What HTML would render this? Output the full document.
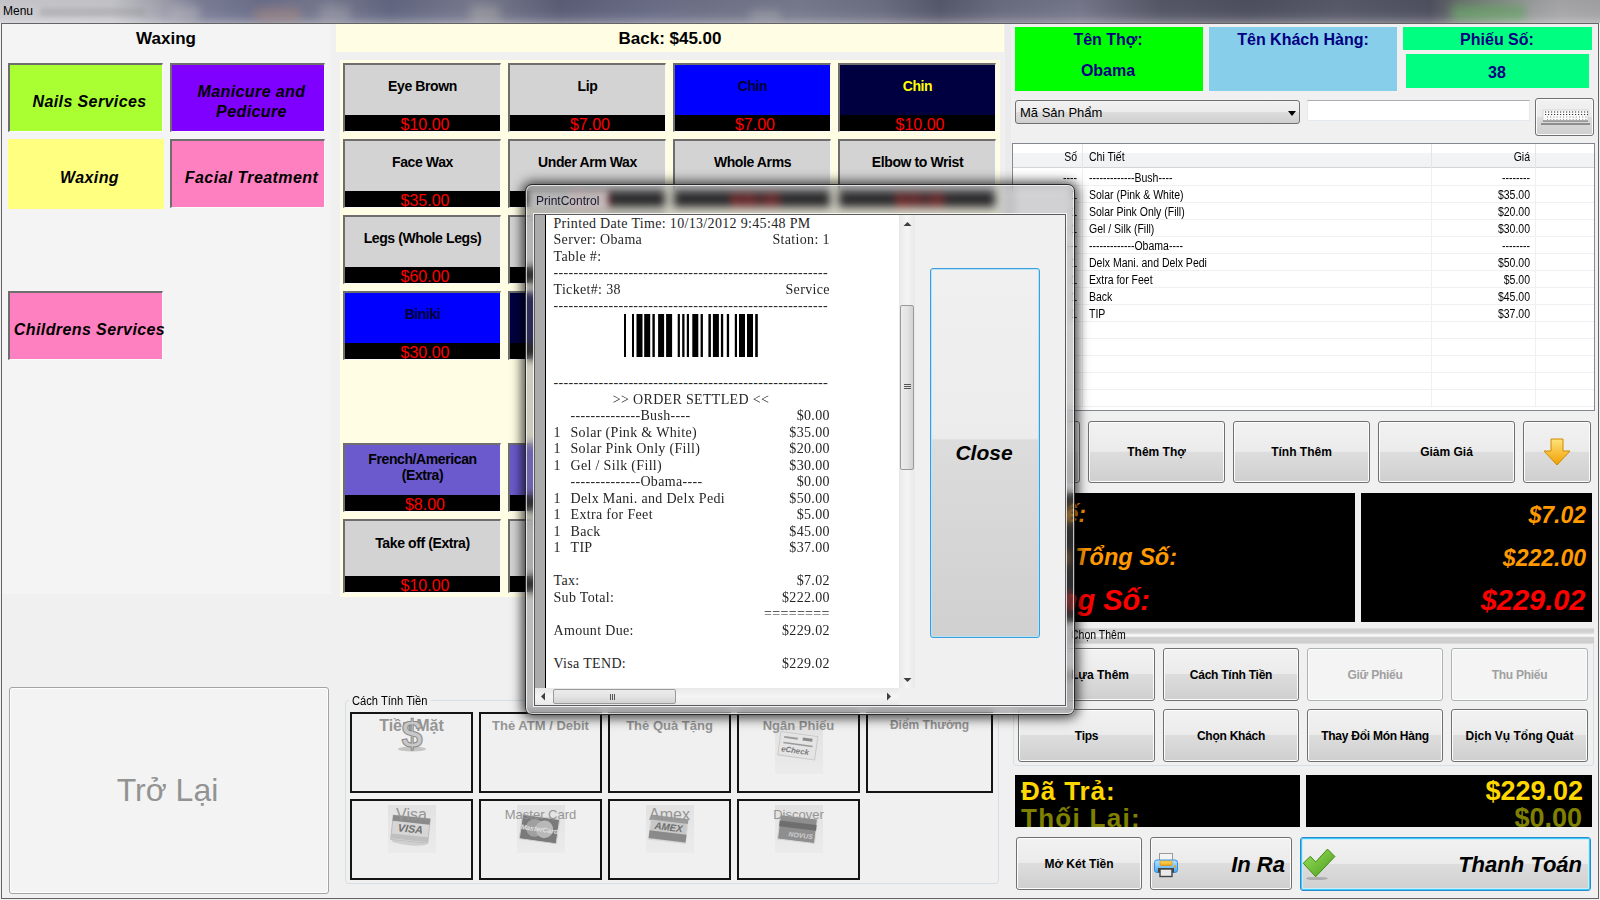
<!DOCTYPE html><html><head><meta charset="utf-8"><style>
html,body{margin:0;padding:0;width:1600px;height:900px;overflow:hidden;background:#f0f0f0;font-family:"Liberation Sans",sans-serif;}
div{position:absolute;box-sizing:border-box;}
.t{white-space:nowrap;line-height:1;}
.w7{border:1px solid #707070;border-radius:3px;background:linear-gradient(180deg,#f2f2f2 0%,#ebebeb 49%,#dddddd 50%,#cfcfcf 100%);box-shadow:inset 0 0 0 1px #fcfcfc;}
.w7d{border:1px solid #adb2b5;border-radius:3px;background:#f4f4f4;box-shadow:inset 0 0 0 1px #fcfcfc;}
.cat{border-top:2px solid #6e6e6e;border-left:2px solid #6e6e6e;border-right:1px solid #fcfcfc;border-bottom:1px solid #fcfcfc;}
.cat0 .t,.cat .t{font-weight:bold;font-style:italic;font-size:16px;color:#000;}
.pb{border-top:2px solid #6e6e6e;border-left:2px solid #6e6e6e;border-right:1px solid #fafafa;border-bottom:1px solid #fafafa;overflow:hidden;}
.pb .lb{position:absolute;left:0;right:0;text-align:center;font-weight:bold;font-size:14px;line-height:17px;white-space:nowrap;letter-spacing:-0.4px;}
.pb .pr{position:absolute;left:0;right:0;bottom:0;height:16px;background:#000;color:#f00;font-size:16px;text-align:center;line-height:19px;padding-left:5px;overflow:hidden;}
.pay{border:2px solid #141414;}
.pay .t{color:#9a9a9a;}
.blk{background:#000;overflow:hidden;}
</style></head><body><div style="left:0px;top:0px;width:1600px;height:23px;background:linear-gradient(90deg,#c9c9cd 0px,#c6c6cb 110px,#a3a3b0 160px,#7c7e96 200px,#6c6f8a 260px,#787a90 330px,#626680 390px,#7a7c90 480px,#5b5e76 560px,#6a6d86 650px,#717488 720px,#777a8c 800px,#6c6e82 880px,#56586c 940px,#6a6c80 1000px,#75778a 1080px,#565868 1160px,#4e5060 1250px,#585a6a 1340px,#4f5160 1430px,#6a6e6e 1460px,#868a88 1500px,#9a9c9c 1530px,#a6a6a8 1560px,#a2a2a4 1600px);"></div><div style="left:1452px;top:5px;width:73px;height:17px;background:#68a268;filter:blur(5px);opacity:.75;"></div><div style="left:0px;top:0px;width:1600px;height:23px;background:linear-gradient(180deg,rgba(0,0,0,.03) 0px,rgba(255,255,255,0) 10px,rgba(255,255,255,.06) 16px,rgba(255,255,255,.2) 21px,rgba(255,255,255,.3) 23px);"></div><div style="left:40px;top:8px;width:105px;height:8px;background:rgba(140,140,140,.35);filter:blur(2.5px);"></div><div style="left:255px;top:8px;width:45px;height:14px;background:rgba(200,150,120,.35);filter:blur(5px);"></div><div style="left:170px;top:6px;width:30px;height:16px;background:rgba(200,200,200,.35);filter:blur(5px);"></div><div style="left:320px;top:6px;width:30px;height:16px;background:rgba(190,190,190,.3);filter:blur(5px);"></div><div style="left:470px;top:6px;width:30px;height:16px;background:rgba(200,200,180,.3);filter:blur(5px);"></div><div style="left:750px;top:10px;width:30px;height:12px;background:rgba(200,200,200,.3);filter:blur(5px);"></div><div class="t" style="left:3px;top:5px;font-size:12px;color:#000;">Menu</div><div style="left:1px;top:23px;width:1598px;height:876px;border:1px solid #646464;background:#f0f0f0;"></div><div style="left:2px;top:24px;width:329px;height:570px;background:#f4f4f4;"></div><div class="t" style="left:-34.0px;top:30px;width:400px;text-align:center;font-weight:bold;font-size:17px;">Waxing</div><div class="cat" style="left:8px;top:63px;width:155px;height:69px;background:#aaff33;"><div class="t" style="left:3.5px;right:-3.5px;top:calc(50% + 4px);transform:translateY(-50%);text-align:center;line-height:20px;letter-spacing:0.4px;">Nails Services</div></div><div class="cat" style="left:170px;top:63px;width:155px;height:69px;background:#8000ff;"><div class="t" style="left:3.5px;right:-3.5px;top:calc(50% + 4px);transform:translateY(-50%);text-align:center;line-height:20px;letter-spacing:0.4px;">Manicure and<br>Pedicure</div></div><div class="cat0" style="left:8px;top:139px;width:156px;height:70px;background:#ffff80;"><div class="t" style="left:3.5px;right:-3.5px;top:calc(50% + 4px);transform:translateY(-50%);text-align:center;line-height:20px;letter-spacing:0.4px;">Waxing</div></div><div class="cat" style="left:170px;top:139px;width:155px;height:69px;background:#ff80c0;"><div class="t" style="left:3.5px;right:-3.5px;top:calc(50% + 4px);transform:translateY(-50%);text-align:center;line-height:20px;letter-spacing:0.4px;">Facial Treatment</div></div><div class="cat" style="left:8px;top:291px;width:155px;height:69px;background:#ff80c0;"><div class="t" style="left:3.5px;right:-3.5px;top:calc(50% + 4px);transform:translateY(-50%);text-align:center;line-height:20px;letter-spacing:0.4px;">Childrens Services</div></div><div style="left:336px;top:24px;width:668px;height:28px;background:#fffde3;"></div><div class="t" style="left:470.0px;top:30px;width:400px;text-align:center;font-weight:bold;font-size:17px;">Back: $45.00</div><div style="left:340px;top:60px;width:660px;height:537px;background:#fffde3;"></div><div class="pb" style="left:343px;top:63px;width:158px;height:69px;background:#d3d3d3;"><div class="lb" style="top:13px;color:#000;">Eye Brown</div><div class="pr" style="height:16px;">$10.00</div></div><div class="pb" style="left:508px;top:63px;width:158px;height:69px;background:#d3d3d3;"><div class="lb" style="top:13px;color:#000;">Lip</div><div class="pr" style="height:16px;">$7.00</div></div><div class="pb" style="left:673px;top:63px;width:158px;height:69px;background:#0000ff;"><div class="lb" style="top:13px;color:#000030;">Chin</div><div class="pr" style="height:16px;">$7.00</div></div><div class="pb" style="left:838px;top:63px;width:158px;height:69px;background:#000040;"><div class="lb" style="top:13px;color:#ffff00;">Chin</div><div class="pr" style="height:16px;">$10.00</div></div><div class="pb" style="left:343px;top:139px;width:158px;height:69px;background:#d3d3d3;"><div class="lb" style="top:13px;color:#000;">Face Wax</div><div class="pr" style="height:16px;">$35.00</div></div><div class="pb" style="left:508px;top:139px;width:158px;height:69px;background:#d3d3d3;"><div class="lb" style="top:13px;color:#000;">Under Arm Wax</div><div class="pr" style="height:16px;">$8.00</div></div><div class="pb" style="left:673px;top:139px;width:158px;height:69px;background:#d3d3d3;"><div class="lb" style="top:13px;color:#000;">Whole Arms</div><div class="pr" style="height:16px;">$30.00</div></div><div class="pb" style="left:838px;top:139px;width:158px;height:69px;background:#d3d3d3;"><div class="lb" style="top:13px;color:#000;">Elbow to Wrist</div><div class="pr" style="height:16px;">$20.00</div></div><div class="pb" style="left:343px;top:215px;width:158px;height:69px;background:#d3d3d3;"><div class="lb" style="top:13px;color:#000;">Legs (Whole Legs)</div><div class="pr" style="height:16px;">$60.00</div></div><div class="pb" style="left:508px;top:215px;width:158px;height:69px;background:#d3d3d3;"><div class="lb" style="top:13px;color:#000;">Half Legs</div><div class="pr" style="height:16px;">$35.00</div></div><div class="pb" style="left:343px;top:291px;width:158px;height:69px;background:#0000ff;"><div class="lb" style="top:13px;color:#000030;">Biniki</div><div class="pr" style="height:16px;">$30.00</div></div><div class="pb" style="left:508px;top:291px;width:158px;height:69px;background:#000040;"><div class="lb" style="top:13px;color:#ffff00;">Brazilian</div><div class="pr" style="height:16px;">$50.00</div></div><div class="pb" style="left:343px;top:443px;width:158px;height:69px;background:#6a5acd;"><div class="lb" style="top:5.5px;color:#000;line-height:16.5px;">French/American<br>(Extra)</div><div class="pr" style="height:16px;">$8.00</div></div><div class="pb" style="left:508px;top:443px;width:158px;height:69px;background:#6a5acd;"><div class="lb" style="top:13px;color:#000;">Pink &amp; White</div><div class="pr" style="height:16px;">$8.00</div></div><div class="pb" style="left:343px;top:519px;width:158px;height:74px;background:#d3d3d3;"><div class="lb" style="top:13.5px;color:#000;">Take off (Extra)</div><div class="pr" style="height:16px;">$10.00</div></div><div class="pb" style="left:508px;top:519px;width:158px;height:74px;background:#d3d3d3;"><div class="lb" style="top:13.5px;color:#000;">Design</div><div class="pr" style="height:16px;">$5.00</div></div><div style="left:9px;top:687px;width:320px;height:207px;border:1px solid #a3a3a3;border-radius:3px;background:#f3f3f3;box-shadow:inset 0 0 0 1px #fdfdfd;"><div class="t" style="left:-1.5px;right:1.5px;top:85.7px;text-align:center;font-size:32px;color:#939393;">Trở Lại</div></div><div style="left:345px;top:700px;width:654px;height:184px;border:1px solid #d5dfe5;border-radius:3px;"></div><div style="left:349px;top:690px;width:82px;height:16px;background:#f0f0f0;"></div><div class="t" style="left:352px;top:695px;font-size:12px;color:#000;transform:scaleX(0.93);transform-origin:left;">Cách Tính Tiền</div><div class="pay" style="left:350px;top:712px;width:123px;height:81px;"><div class="t" style="left:0;right:0;text-align:center;color:#959595;font-weight:bold;font-size:16px;top:4px;">Tiền Mặt</div></div><div class="pay" style="left:479px;top:712px;width:123px;height:81px;"><div class="t" style="left:0;right:0;text-align:center;color:#959595;font-weight:bold;font-size:13px;top:4.5px;">Thẻ ATM / Debit</div></div><div class="pay" style="left:608px;top:712px;width:123px;height:81px;"><div class="t" style="left:0;right:0;text-align:center;color:#959595;font-weight:bold;font-size:13px;top:4.5px;">Thẻ Quà Tặng</div></div><svg style="position:absolute;left:774.5px;top:726px" width="48" height="48" viewBox="0 0 48 48"><defs><linearGradient id="sqg" x1="0" y1="0" x2="0" y2="1"><stop offset="0" stop-color="#e2e2e2"/><stop offset="1" stop-color="#ebebeb"/></linearGradient></defs><rect x="0" y="0" width="48" height="48" fill="url(#sqg)"/><g transform="translate(-1,4) scale(0.98)"><g transform="rotate(8 24 18)"><rect x="5" y="4" width="38" height="24" fill="#e4e4e4" stroke="#c8c8c8"/><rect x="9" y="8" width="14" height="2" fill="#9a9a9a"/><rect x="28" y="7" width="10" height="3" fill="#8a8a8a"/><rect x="9" y="14" width="30" height="1.5" fill="#9a9a9a"/><text x="22" y="24" text-anchor="middle" font-family="Liberation Sans" font-weight="bold" font-style="italic" font-size="8" fill="#7a7a7a">eCheck</text></g></g></svg><div class="pay" style="left:737px;top:712px;width:123px;height:81px;"><div class="t" style="left:0;right:0;text-align:center;color:#959595;font-weight:bold;font-size:13px;top:4.5px;">Ngân Phiếu</div></div><div class="pay" style="left:866px;top:712px;width:127px;height:81px;"><div class="t" style="left:0;right:0;text-align:center;color:#959595;font-weight:bold;font-size:12px;top:5px;">Điểm Thưởng</div></div><svg style="position:absolute;left:387.5px;top:805px" width="48" height="48" viewBox="0 0 48 48"><defs><linearGradient id="sqg" x1="0" y1="0" x2="0" y2="1"><stop offset="0" stop-color="#e2e2e2"/><stop offset="1" stop-color="#ebebeb"/></linearGradient></defs><rect x="0" y="0" width="48" height="48" fill="url(#sqg)"/><g transform="translate(-1,4) scale(0.98)"><g transform="rotate(6 24 20)"><ellipse cx="24" cy="34" rx="18" ry="3" fill="#cfcfcf"/><rect x="5" y="8" width="38" height="25" fill="#d6d6d6" stroke="#bdbdbd"/><rect x="5" y="8" width="38" height="6" fill="#8a8a8a"/><rect x="5" y="27" width="38" height="5" fill="#bfbfbf"/><text x="24" y="24" text-anchor="middle" font-family="Liberation Sans" font-weight="bold" font-style="italic" font-size="11" fill="#707070">VISA</text></g></g></svg><div class="pay" style="left:350px;top:799px;width:123px;height:81px;"><div class="t" style="left:0;right:0;text-align:center;color:#959595;font-size:16px;top:6px;">Visa</div></div><svg style="position:absolute;left:516.5px;top:805px" width="48" height="48" viewBox="0 0 48 48"><defs><linearGradient id="sqg" x1="0" y1="0" x2="0" y2="1"><stop offset="0" stop-color="#e2e2e2"/><stop offset="1" stop-color="#ebebeb"/></linearGradient></defs><rect x="0" y="0" width="48" height="48" fill="url(#sqg)"/><g transform="translate(-1,4) scale(0.98)"><g transform="rotate(8 24 20)"><rect x="5" y="8" width="38" height="25" fill="#7a7a7a" stroke="#cfcfcf"/><circle cx="19" cy="20" r="9" fill="#a0a0a0"/><circle cx="29" cy="20" r="9" fill="#b8b8b8"/><text x="24" y="23" text-anchor="middle" font-family="Liberation Sans" font-weight="bold" font-style="italic" font-size="7" fill="#e0e0e0">MasterCard</text></g></g></svg><div class="pay" style="left:479px;top:799px;width:123px;height:81px;"><div class="t" style="left:0;right:0;text-align:center;color:#959595;font-size:13px;top:7px;">Master Card</div></div><svg style="position:absolute;left:645.5px;top:805px" width="48" height="48" viewBox="0 0 48 48"><defs><linearGradient id="sqg" x1="0" y1="0" x2="0" y2="1"><stop offset="0" stop-color="#e2e2e2"/><stop offset="1" stop-color="#ebebeb"/></linearGradient></defs><rect x="0" y="0" width="48" height="48" fill="url(#sqg)"/><g transform="translate(-1,4) scale(0.98)"><g transform="rotate(7 24 20)"><rect x="5" y="8" width="38" height="25" fill="#c8c8c8" stroke="#d8d8d8"/><rect x="5" y="8" width="38" height="5" fill="#9a9a9a"/><rect x="5" y="24" width="38" height="8" fill="#8a8a8a"/><text x="24" y="22" text-anchor="middle" font-family="Liberation Sans" font-weight="bold" font-style="italic" font-size="10" fill="#6e6e6e">AMEX</text></g></g></svg><div class="pay" style="left:608px;top:799px;width:123px;height:81px;"><div class="t" style="left:0;right:0;text-align:center;color:#959595;font-size:16px;top:6px;">Amex</div></div><svg style="position:absolute;left:774.5px;top:805px" width="48" height="48" viewBox="0 0 48 48"><defs><linearGradient id="sqg" x1="0" y1="0" x2="0" y2="1"><stop offset="0" stop-color="#e2e2e2"/><stop offset="1" stop-color="#ebebeb"/></linearGradient></defs><rect x="0" y="0" width="48" height="48" fill="url(#sqg)"/><g transform="translate(-1,4) scale(0.98)"><g transform="rotate(7 24 20)"><rect x="5" y="8" width="38" height="25" fill="#8e8e8e" stroke="#d8d8d8"/><rect x="5" y="14" width="38" height="6" fill="#6e6e6e"/><text x="28" y="29" text-anchor="middle" font-family="Liberation Sans" font-weight="bold" font-style="italic" font-size="7" fill="#d0d0d0">NOVUS</text></g></g></svg><div class="pay" style="left:737px;top:799px;width:123px;height:81px;"><div class="t" style="left:0;right:0;text-align:center;color:#959595;font-size:13px;top:7px;">Discover</div></div><svg style="position:absolute;left:392px;top:714px" width="40" height="42" viewBox="0 0 40 42"><ellipse cx="20" cy="35" rx="14" ry="2.5" fill="#c4c4c4"/><text x="20" y="33" text-anchor="middle" font-family="Liberation Sans" font-weight="bold" font-size="38" fill="#c8c8c8" stroke="#8a8a8a" stroke-width="1">$</text></svg><div style="left:1005px;top:24px;width:6px;height:576px;background:#ebebeb;"></div><div style="left:1015px;top:27px;width:188px;height:64px;background:#00ff00;"></div><div class="t" style="left:908.0px;top:31.5px;width:400px;text-align:center;font-weight:bold;font-size:16px;color:#000080;">Tên Thợ:</div><div class="t" style="left:908.0px;top:63px;width:400px;text-align:center;font-weight:bold;font-size:16px;color:#000080;">Obama</div><div style="left:1209px;top:27px;width:188px;height:64px;background:#87ceeb;"></div><div class="t" style="left:1103.0px;top:31.5px;width:400px;text-align:center;font-weight:bold;font-size:16px;color:#000080;">Tên Khách Hàng:</div><div style="left:1403px;top:27px;width:189px;height:23px;background:#00ff80;"></div><div class="t" style="left:1297.0px;top:31.5px;width:400px;text-align:center;font-weight:bold;font-size:16px;color:#000080;">Phiếu Số:</div><div style="left:1406px;top:54px;width:183px;height:34px;background:#00ff80;"></div><div class="t" style="left:1297.0px;top:65px;width:400px;text-align:center;font-weight:bold;font-size:16px;color:#000080;">38</div><div style="left:1015px;top:100px;width:285px;height:24px;border:1px solid #707070;border-radius:3px;background:linear-gradient(180deg,#f2f2f2 0%,#ebebeb 49%,#dddddd 50%,#cfcfcf 100%);"><div class="t" style="left:4px;top:5px;font-size:13px;color:#000;">Mã Sản Phẩm</div><div style="left:272px;top:10px;width:0;height:0;border-left:4px solid transparent;border-right:4px solid transparent;border-top:5px solid #000;"></div></div><div style="left:1307px;top:100px;width:223px;height:21px;background:#fff;border:1px solid #e3e9ef;border-top-color:#abadb3;"></div><div class="w7" style="left:1535px;top:98px;width:59px;height:38px;"><svg style="position:absolute;left:3px;top:8px" width="54" height="20" viewBox="0 0 54 20"><rect x="4" y="3" width="45" height="11" fill="#fbfbfb" stroke="#cfcfcf" stroke-width="0.8"/><line x1="6" y1="5" x2="49" y2="5" stroke="#222" stroke-width="1" stroke-dasharray="1.2 1.8"/><line x1="6" y1="7.5" x2="49" y2="7.5" stroke="#333" stroke-width="1" stroke-dasharray="1.2 1.8"/><line x1="8" y1="10" x2="49" y2="10" stroke="#666" stroke-width="0.8" stroke-dasharray="1 2.2"/><line x1="8" y1="12.5" x2="49" y2="12.5" stroke="#888" stroke-width="0.8" stroke-dasharray="1 2.2"/><line x1="4" y1="14" x2="49" y2="14" stroke="#555" stroke-width="0.9"/><line x1="2" y1="17" x2="51" y2="17" stroke="#444" stroke-width="1.1"/></svg></div><div style="left:1012px;top:143px;width:583px;height:268px;background:#fff;border:1px solid #828790;"></div><div style="left:1013px;top:144px;width:581px;height:24px;background:linear-gradient(180deg,#ffffff 0%,#ffffff 40%,#f3f4f6 41%,#f1f2f4 100%);border-bottom:1px solid #d5d5d5;"></div><div style="left:1082px;top:144px;width:1px;height:24px;background:#e3e5e8;"></div><div style="left:1431px;top:144px;width:1px;height:24px;background:#e3e5e8;"></div><div style="left:1535px;top:144px;width:1px;height:24px;background:#e3e5e8;"></div><div class="t" style="left:677px;top:151px;width:400px;text-align:right;font-size:12px;color:#000;transform:scaleX(0.875);transform-origin:right;">Số</div><div class="t" style="left:1089px;top:151px;font-size:12px;color:#000;transform:scaleX(0.875);transform-origin:left;">Chi Tiết</div><div class="t" style="left:1130px;top:151px;width:400px;text-align:right;font-size:12px;color:#000;transform:scaleX(0.875);transform-origin:right;">Giá</div><div style="left:1013px;top:185px;width:581px;height:1px;background:#f0f0f0;"></div><div style="left:1013px;top:202px;width:581px;height:1px;background:#f0f0f0;"></div><div style="left:1013px;top:219px;width:581px;height:1px;background:#f0f0f0;"></div><div style="left:1013px;top:236px;width:581px;height:1px;background:#f0f0f0;"></div><div style="left:1013px;top:253px;width:581px;height:1px;background:#f0f0f0;"></div><div style="left:1013px;top:270px;width:581px;height:1px;background:#f0f0f0;"></div><div style="left:1013px;top:287px;width:581px;height:1px;background:#f0f0f0;"></div><div style="left:1013px;top:304px;width:581px;height:1px;background:#f0f0f0;"></div><div style="left:1013px;top:321px;width:581px;height:1px;background:#f0f0f0;"></div><div style="left:1013px;top:338px;width:581px;height:1px;background:#f0f0f0;"></div><div style="left:1013px;top:355px;width:581px;height:1px;background:#f0f0f0;"></div><div style="left:1013px;top:372px;width:581px;height:1px;background:#f0f0f0;"></div><div style="left:1013px;top:389px;width:581px;height:1px;background:#f0f0f0;"></div><div style="left:1013px;top:406px;width:581px;height:1px;background:#f0f0f0;"></div><div style="left:1082px;top:168px;width:1px;height:238px;background:#f0f0f0;"></div><div style="left:1431px;top:168px;width:1px;height:238px;background:#f0f0f0;"></div><div style="left:1535px;top:168px;width:1px;height:238px;background:#f0f0f0;"></div><div class="t" style="left:677px;top:172px;width:400px;text-align:right;font-size:12px;color:#000;transform:scaleX(0.875);transform-origin:right;">----</div><div class="t" style="left:1089px;top:172px;font-size:12px;color:#000;transform:scaleX(0.875);transform-origin:left;">-------------Bush----</div><div class="t" style="left:1130px;top:172px;width:400px;text-align:right;font-size:12px;color:#000;transform:scaleX(0.875);transform-origin:right;">--------</div><div class="t" style="left:677px;top:189px;width:400px;text-align:right;font-size:12px;color:#000;transform:scaleX(0.875);transform-origin:right;">1</div><div class="t" style="left:1089px;top:189px;font-size:12px;color:#000;transform:scaleX(0.875);transform-origin:left;">Solar (Pink &amp; White)</div><div class="t" style="left:1130px;top:189px;width:400px;text-align:right;font-size:12px;color:#000;transform:scaleX(0.875);transform-origin:right;">$35.00</div><div class="t" style="left:677px;top:206px;width:400px;text-align:right;font-size:12px;color:#000;transform:scaleX(0.875);transform-origin:right;">1</div><div class="t" style="left:1089px;top:206px;font-size:12px;color:#000;transform:scaleX(0.875);transform-origin:left;">Solar Pink Only (Fill)</div><div class="t" style="left:1130px;top:206px;width:400px;text-align:right;font-size:12px;color:#000;transform:scaleX(0.875);transform-origin:right;">$20.00</div><div class="t" style="left:677px;top:223px;width:400px;text-align:right;font-size:12px;color:#000;transform:scaleX(0.875);transform-origin:right;">1</div><div class="t" style="left:1089px;top:223px;font-size:12px;color:#000;transform:scaleX(0.875);transform-origin:left;">Gel / Silk (Fill)</div><div class="t" style="left:1130px;top:223px;width:400px;text-align:right;font-size:12px;color:#000;transform:scaleX(0.875);transform-origin:right;">$30.00</div><div class="t" style="left:677px;top:240px;width:400px;text-align:right;font-size:12px;color:#000;transform:scaleX(0.875);transform-origin:right;">----</div><div class="t" style="left:1089px;top:240px;font-size:12px;color:#000;transform:scaleX(0.875);transform-origin:left;">-------------Obama----</div><div class="t" style="left:1130px;top:240px;width:400px;text-align:right;font-size:12px;color:#000;transform:scaleX(0.875);transform-origin:right;">--------</div><div class="t" style="left:677px;top:257px;width:400px;text-align:right;font-size:12px;color:#000;transform:scaleX(0.875);transform-origin:right;">1</div><div class="t" style="left:1089px;top:257px;font-size:12px;color:#000;transform:scaleX(0.875);transform-origin:left;">Delx Mani. and Delx Pedi</div><div class="t" style="left:1130px;top:257px;width:400px;text-align:right;font-size:12px;color:#000;transform:scaleX(0.875);transform-origin:right;">$50.00</div><div class="t" style="left:677px;top:274px;width:400px;text-align:right;font-size:12px;color:#000;transform:scaleX(0.875);transform-origin:right;">1</div><div class="t" style="left:1089px;top:274px;font-size:12px;color:#000;transform:scaleX(0.875);transform-origin:left;">Extra for Feet</div><div class="t" style="left:1130px;top:274px;width:400px;text-align:right;font-size:12px;color:#000;transform:scaleX(0.875);transform-origin:right;">$5.00</div><div class="t" style="left:677px;top:291px;width:400px;text-align:right;font-size:12px;color:#000;transform:scaleX(0.875);transform-origin:right;">1</div><div class="t" style="left:1089px;top:291px;font-size:12px;color:#000;transform:scaleX(0.875);transform-origin:left;">Back</div><div class="t" style="left:1130px;top:291px;width:400px;text-align:right;font-size:12px;color:#000;transform:scaleX(0.875);transform-origin:right;">$45.00</div><div class="t" style="left:677px;top:308px;width:400px;text-align:right;font-size:12px;color:#000;transform:scaleX(0.875);transform-origin:right;">1</div><div class="t" style="left:1089px;top:308px;font-size:12px;color:#000;transform:scaleX(0.875);transform-origin:left;">TIP</div><div class="t" style="left:1130px;top:308px;width:400px;text-align:right;font-size:12px;color:#000;transform:scaleX(0.875);transform-origin:right;">$37.00</div><div class="w7" style="left:1012px;top:421px;width:68px;height:62px;"></div><div class="w7" style="left:1088px;top:421px;width:137px;height:62px;"><div class="t" style="left:0;right:0;top:24px;text-align:center;font-weight:bold;font-size:12px;">Thêm Thợ</div></div><div class="w7" style="left:1233px;top:421px;width:137px;height:62px;"><div class="t" style="left:0;right:0;top:24px;text-align:center;font-weight:bold;font-size:12px;">Tính Thêm</div></div><div class="w7" style="left:1378px;top:421px;width:137px;height:62px;"><div class="t" style="left:0;right:0;top:24px;text-align:center;font-weight:bold;font-size:12px;">Giảm Giá</div></div><div class="w7" style="left:1523px;top:421px;width:68px;height:62px;"><svg style="position:absolute;left:18px;top:14px" width="30" height="32" viewBox="0 0 30 32"><defs><linearGradient id="ar" x1="0" y1="0" x2="0" y2="1"><stop offset="0" stop-color="#ffe27a"/><stop offset="1" stop-color="#f0a000"/></linearGradient></defs><path d="M9 3 H21 V15 H28 L15 29 L2 15 H9 Z" fill="url(#ar)" stroke="#d08a00" stroke-width="1"/></svg></div><div class="blk" style="left:1015px;top:493px;width:340px;height:129px;"></div><div class="blk" style="left:1361px;top:493px;width:231px;height:129px;"></div><div class="t" style="left:777px;top:545.5px;width:400px;text-align:right;font-weight:bold;font-style:italic;color:#ff9900;font-size:23.5px;">Tạm Tổng Số:</div><div class="t" style="left:686px;top:502.5px;width:400px;text-align:right;font-weight:bold;font-style:italic;color:#ff9900;font-size:23px;">Thuế:</div><div class="t" style="left:750px;top:586px;width:400px;text-align:right;font-weight:bold;font-style:italic;color:#ff0000;font-size:29px;">Tổng Số:</div><div class="t" style="left:1186px;top:504px;width:400px;text-align:right;font-weight:bold;font-style:italic;color:#ff9900;font-size:23px;">$7.02</div><div class="t" style="left:1186px;top:547px;width:400px;text-align:right;font-weight:bold;font-style:italic;color:#ff9900;font-size:23px;">$222.00</div><div class="t" style="left:1185.5px;top:586px;width:400px;text-align:right;font-weight:bold;font-style:italic;color:#ff0000;font-size:29px;">$229.02</div><div style="left:1013px;top:635px;width:581px;height:131px;border:1px solid #d5dfe5;border-radius:3px;"></div><div style="left:1013px;top:628px;width:581px;height:16px;background:linear-gradient(180deg,#e2e2e2 0px,#cdcdcd 2px,#d2d2d2 4px,#dadada 5px,#e6e6e6 6px,#f8f8f8 7px,#fbfbfb 8px,#dcdcdc 9px,#cbcbcb 10px,#d3d3d3 12px,#cacaca 14px,#e0e0e0 16px);"></div><div class="t" style="left:1071px;top:629px;font-size:12px;color:#000;transform:scaleX(0.875);transform-origin:left;">Chọn Thêm</div><div class="w7" style="left:1018px;top:648px;width:137px;height:53px;"><div class="t" style="right:25px;top:20px;font-weight:bold;font-size:12px;color:#000;">Chọn Lựa Thêm</div></div><div class="w7" style="left:1163px;top:648px;width:136px;height:53px;"><div class="t" style="left:0;right:0;top:19.5px;text-align:center;font-weight:bold;font-size:12px;letter-spacing:-0.25px;color:#000;">Cách Tính Tiền</div></div><div class="w7d" style="left:1307px;top:648px;width:136px;height:53px;"><div class="t" style="left:0;right:0;top:19.5px;text-align:center;font-weight:bold;font-size:12px;letter-spacing:-0.25px;color:#a0a0a0;">Giữ Phiếu</div></div><div class="w7d" style="left:1451px;top:648px;width:137px;height:53px;"><div class="t" style="left:0;right:0;top:19.5px;text-align:center;font-weight:bold;font-size:12px;letter-spacing:-0.25px;color:#a0a0a0;">Thu Phiếu</div></div><div class="w7" style="left:1018px;top:709px;width:137px;height:53px;"><div class="t" style="left:0;right:0;top:19.5px;text-align:center;font-weight:bold;font-size:12px;letter-spacing:-0.25px;">Tips</div></div><div class="w7" style="left:1163px;top:709px;width:136px;height:53px;"><div class="t" style="left:0;right:0;top:19.5px;text-align:center;font-weight:bold;font-size:12px;letter-spacing:-0.25px;">Chọn Khách</div></div><div class="w7" style="left:1307px;top:709px;width:136px;height:53px;"><div class="t" style="left:0;right:0;top:19.5px;text-align:center;font-weight:bold;font-size:12px;letter-spacing:-0.25px;">Thay Đổi Món Hàng</div></div><div class="w7" style="left:1451px;top:709px;width:137px;height:53px;"><div class="t" style="left:0;right:0;top:19.5px;text-align:center;font-weight:bold;font-size:12px;">Dịch Vụ Tổng Quát</div></div><div class="blk" style="left:1015px;top:775px;width:285px;height:52px;"><div class="t" style="left:6px;top:3px;font-size:26px;letter-spacing:0.9px;font-weight:bold;color:#ffd700;">Đã Trả:</div><div class="t" style="left:6px;top:29.5px;font-size:26px;letter-spacing:1.3px;font-weight:bold;color:#808000;">Thối Lại:</div></div><div class="blk" style="left:1306px;top:775px;width:286px;height:52px;"><div class="t" style="right:9px;top:3px;font-size:27px;font-weight:bold;color:#ffd700;">$229.02</div><div class="t" style="right:10px;top:29.5px;font-size:27px;font-weight:bold;color:#808000;">$0.00</div></div><div class="w7" style="left:1016px;top:837px;width:126px;height:53px;"><div class="t" style="left:0;right:0;top:20px;text-align:center;font-weight:bold;font-size:12px;">Mở Két Tiền</div></div><div class="w7" style="left:1150px;top:837px;width:142px;height:53px;"><div class="t" style="right:6px;top:15.5px;font-weight:bold;font-style:italic;font-size:22px;">In Ra</div><svg style="position:absolute;left:2px;top:14px" width="28" height="26" viewBox="0 0 28 26"><defs><linearGradient id="pbody" x1="0" y1="0" x2="0" y2="1"><stop offset="0" stop-color="#b8e4ff"/><stop offset="1" stop-color="#4aa6ec"/></linearGradient><linearGradient id="porg" x1="0" y1="0" x2="0" y2="1"><stop offset="0" stop-color="#ffe066"/><stop offset="1" stop-color="#f0a010"/></linearGradient></defs><rect x="6.5" y="1.5" width="13" height="8" fill="#f4f4f4" stroke="#9a9a9a"/><rect x="1.5" y="8" width="23" height="12.5" rx="2.5" fill="url(#pbody)" stroke="#3a8fd8"/><rect x="7" y="9" width="12" height="4.5" rx="1.2" fill="url(#porg)" stroke="#d88a00" stroke-width="0.6"/><rect x="5" y="16" width="16" height="4.5" fill="#444"/><rect x="7" y="17" width="12" height="7.5" fill="#eaeaea" stroke="#444" stroke-width="1.4"/><rect x="21" y="13.5" width="2" height="2" fill="#f0a000"/></svg></div><div class="w7" style="left:1300px;top:837px;width:291px;height:54px;border-color:#2a8ad0;box-shadow:inset 0 0 0 1px #3fcaf6,inset 0 0 0 2px #c8eefc;"><div class="t" style="right:8px;top:15.5px;font-weight:bold;font-style:italic;font-size:22px;">Thanh Toán</div><svg style="position:absolute;left:0px;top:9px" width="38" height="34" viewBox="0 0 38 34"><defs><linearGradient id="chk" x1="0" y1="0" x2="1" y2="1"><stop offset="0" stop-color="#9be45a"/><stop offset="1" stop-color="#4a9a1e"/></linearGradient></defs><ellipse cx="16" cy="31.5" rx="11" ry="1.6" fill="#8a8a8a" opacity=".55"/><path d="M2.3 16.3 L9.3 9.3 L14.7 15 L26.5 2.1 L33.9 9.5 L14.7 29.7 Z" fill="url(#chk)" stroke="#3f8a12" stroke-width="1"/></svg></div><div style="left:525px;top:185px;width:550px;height:530px;border-radius:7px;box-shadow:0 0 12px 3px rgba(0,0,0,.75);"></div><div style="left:525px;top:184px;width:550px;height:531px;border:1px solid #2a2a2a;border-radius:7px;overflow:hidden;backdrop-filter:blur(4px);-webkit-backdrop-filter:blur(4px);background:linear-gradient(180deg,rgba(125,125,130,.34) 0%,rgba(110,110,115,.42) 100%);box-shadow:inset 0 0 0 1px rgba(255,255,255,.7);"><div style="left:2px;top:5px;width:80px;height:20px;background:rgba(215,215,215,.8);filter:blur(3px);"></div><div class="t" style="left:10px;top:10px;font-size:12px;color:#1a1a30;">PrintControl</div></div><div style="left:533px;top:213px;width:534px;height:494px;border:1px solid rgba(255,255,255,.8);"></div><div style="left:534px;top:214px;width:532px;height:492px;border:1px solid #5a5a5a;background:#f0f0f0;"></div><div style="left:535px;top:215px;width:10px;height:473px;background:#ababab;"></div><div style="left:545px;top:215px;width:1px;height:473px;background:#000;"></div><div style="left:546px;top:215px;width:353px;height:473px;background:#fff;"></div><div style="left:899px;top:215px;width:16px;height:473px;background:linear-gradient(90deg,#e8e8e8,#f5f5f5 50%,#e8e8e8);"></div><div style="left:900px;top:305px;width:14px;height:165px;border:1px solid #9a9a9a;border-radius:2px;background:linear-gradient(90deg,#ececec 0%,#e4e4e4 50%,#d2d2d2 100%);"><div style="left:3px;top:78px;width:7px;height:1px;background:#555;"></div><div style="left:3px;top:80px;width:7px;height:1px;background:#555;"></div><div style="left:3px;top:82px;width:7px;height:1px;background:#555;"></div></div><svg style="position:absolute;left:903px;top:221px" width="9" height="6"><path d="M0.5 5 L4.5 1 L8.5 5 Z" fill="#404040"/></svg><svg style="position:absolute;left:903px;top:677px" width="9" height="6"><path d="M0.5 1 L4.5 5 L8.5 1 Z" fill="#404040"/></svg><div style="left:535px;top:688px;width:364px;height:17px;background:linear-gradient(180deg,#e8e8e8,#f5f5f5 50%,#e8e8e8);"></div><div style="left:553px;top:689px;width:123px;height:15px;border:1px solid #9a9a9a;border-radius:2px;background:linear-gradient(180deg,#ececec 0%,#e4e4e4 50%,#d2d2d2 100%);"><div style="left:56px;top:4px;width:1px;height:6px;background:#555;"></div><div style="left:58px;top:4px;width:1px;height:6px;background:#555;"></div><div style="left:60px;top:4px;width:1px;height:6px;background:#555;"></div></div><svg style="position:absolute;left:540px;top:692px" width="6" height="9"><path d="M5 0.5 L1 4.5 L5 8.5 Z" fill="#404040"/></svg><svg style="position:absolute;left:886px;top:692px" width="6" height="9"><path d="M1 0.5 L5 4.5 L1 8.5 Z" fill="#404040"/></svg><div style="left:899px;top:688px;width:16px;height:17px;background:#f0f0f0;"></div><div style="left:930px;top:268px;width:110px;height:370px;border:1px solid #3c9fdc;border-radius:3px;background:linear-gradient(180deg,#f0f0f0 0%,#ececec 46%,#dcdcdc 46.5%,#d0d0d0 100%);box-shadow:inset 0 0 0 1px #b5e3f8;"><div class="t" style="left:-1px;right:1px;top:173px;text-align:center;font-weight:bold;font-style:italic;font-size:21px;">Close</div></div><div class="t" style="left:553.5px;top:216.5px;font-family:'Liberation Serif',serif;font-size:14px;letter-spacing:0.33px;color:#262626;">Printed Date Time: 10/13/2012 9:45:48 PM</div><div class="t" style="left:553.5px;top:233.0px;font-family:'Liberation Serif',serif;font-size:14px;letter-spacing:0.33px;color:#262626;">Server: Obama</div><div class="t" style="left:429.79999999999995px;top:233.0px;width:400px;text-align:right;font-family:'Liberation Serif',serif;font-size:14px;letter-spacing:0.33px;color:#262626;">Station: 1</div><div class="t" style="left:553.5px;top:249.5px;font-family:'Liberation Serif',serif;font-size:14px;letter-spacing:0.33px;color:#262626;">Table #:</div><div class="t" style="left:553.5px;top:266.0px;font-family:'Liberation Serif',serif;font-size:14px;letter-spacing:0.33px;color:#262626;">-------------------------------------------------------</div><div class="t" style="left:553.5px;top:282.5px;font-family:'Liberation Serif',serif;font-size:14px;letter-spacing:0.33px;color:#262626;">Ticket#: 38</div><div class="t" style="left:429.79999999999995px;top:282.5px;width:400px;text-align:right;font-family:'Liberation Serif',serif;font-size:14px;letter-spacing:0.33px;color:#262626;">Service</div><div class="t" style="left:553.5px;top:299.0px;font-family:'Liberation Serif',serif;font-size:14px;letter-spacing:0.33px;color:#262626;">-------------------------------------------------------</div><div class="t" style="left:553.5px;top:375.5px;font-family:'Liberation Serif',serif;font-size:14px;letter-spacing:0.33px;color:#262626;">-------------------------------------------------------</div><div class="t" style="left:491.0px;top:392.5px;width:400px;text-align:center;font-family:'Liberation Serif',serif;font-size:14px;letter-spacing:0.33px;color:#262626;">&gt;&gt; ORDER SETTLED &lt;&lt;</div><div class="t" style="left:570.5px;top:409.0px;font-family:'Liberation Serif',serif;font-size:14px;letter-spacing:0.33px;color:#262626;">--------------Bush----</div><div class="t" style="left:429.79999999999995px;top:409.0px;width:400px;text-align:right;font-family:'Liberation Serif',serif;font-size:14px;letter-spacing:0.33px;color:#262626;">$0.00</div><div class="t" style="left:553.5px;top:425.5px;font-family:'Liberation Serif',serif;font-size:14px;letter-spacing:0.33px;color:#262626;">1</div><div class="t" style="left:570.5px;top:425.5px;font-family:'Liberation Serif',serif;font-size:14px;letter-spacing:0.33px;color:#262626;">Solar (Pink &amp; White)</div><div class="t" style="left:429.79999999999995px;top:425.5px;width:400px;text-align:right;font-family:'Liberation Serif',serif;font-size:14px;letter-spacing:0.33px;color:#262626;">$35.00</div><div class="t" style="left:553.5px;top:442.0px;font-family:'Liberation Serif',serif;font-size:14px;letter-spacing:0.33px;color:#262626;">1</div><div class="t" style="left:570.5px;top:442.0px;font-family:'Liberation Serif',serif;font-size:14px;letter-spacing:0.33px;color:#262626;">Solar Pink Only (Fill)</div><div class="t" style="left:429.79999999999995px;top:442.0px;width:400px;text-align:right;font-family:'Liberation Serif',serif;font-size:14px;letter-spacing:0.33px;color:#262626;">$20.00</div><div class="t" style="left:553.5px;top:458.5px;font-family:'Liberation Serif',serif;font-size:14px;letter-spacing:0.33px;color:#262626;">1</div><div class="t" style="left:570.5px;top:458.5px;font-family:'Liberation Serif',serif;font-size:14px;letter-spacing:0.33px;color:#262626;">Gel / Silk (Fill)</div><div class="t" style="left:429.79999999999995px;top:458.5px;width:400px;text-align:right;font-family:'Liberation Serif',serif;font-size:14px;letter-spacing:0.33px;color:#262626;">$30.00</div><div class="t" style="left:570.5px;top:475.0px;font-family:'Liberation Serif',serif;font-size:14px;letter-spacing:0.33px;color:#262626;">--------------Obama----</div><div class="t" style="left:429.79999999999995px;top:475.0px;width:400px;text-align:right;font-family:'Liberation Serif',serif;font-size:14px;letter-spacing:0.33px;color:#262626;">$0.00</div><div class="t" style="left:553.5px;top:491.5px;font-family:'Liberation Serif',serif;font-size:14px;letter-spacing:0.33px;color:#262626;">1</div><div class="t" style="left:570.5px;top:491.5px;font-family:'Liberation Serif',serif;font-size:14px;letter-spacing:0.33px;color:#262626;">Delx Mani. and Delx Pedi</div><div class="t" style="left:429.79999999999995px;top:491.5px;width:400px;text-align:right;font-family:'Liberation Serif',serif;font-size:14px;letter-spacing:0.33px;color:#262626;">$50.00</div><div class="t" style="left:553.5px;top:508.0px;font-family:'Liberation Serif',serif;font-size:14px;letter-spacing:0.33px;color:#262626;">1</div><div class="t" style="left:570.5px;top:508.0px;font-family:'Liberation Serif',serif;font-size:14px;letter-spacing:0.33px;color:#262626;">Extra for Feet</div><div class="t" style="left:429.79999999999995px;top:508.0px;width:400px;text-align:right;font-family:'Liberation Serif',serif;font-size:14px;letter-spacing:0.33px;color:#262626;">$5.00</div><div class="t" style="left:553.5px;top:524.5px;font-family:'Liberation Serif',serif;font-size:14px;letter-spacing:0.33px;color:#262626;">1</div><div class="t" style="left:570.5px;top:524.5px;font-family:'Liberation Serif',serif;font-size:14px;letter-spacing:0.33px;color:#262626;">Back</div><div class="t" style="left:429.79999999999995px;top:524.5px;width:400px;text-align:right;font-family:'Liberation Serif',serif;font-size:14px;letter-spacing:0.33px;color:#262626;">$45.00</div><div class="t" style="left:553.5px;top:541.0px;font-family:'Liberation Serif',serif;font-size:14px;letter-spacing:0.33px;color:#262626;">1</div><div class="t" style="left:570.5px;top:541.0px;font-family:'Liberation Serif',serif;font-size:14px;letter-spacing:0.33px;color:#262626;">TIP</div><div class="t" style="left:429.79999999999995px;top:541.0px;width:400px;text-align:right;font-family:'Liberation Serif',serif;font-size:14px;letter-spacing:0.33px;color:#262626;">$37.00</div><div class="t" style="left:553.5px;top:574.0px;font-family:'Liberation Serif',serif;font-size:14px;letter-spacing:0.33px;color:#262626;">Tax:</div><div class="t" style="left:429.79999999999995px;top:574.0px;width:400px;text-align:right;font-family:'Liberation Serif',serif;font-size:14px;letter-spacing:0.33px;color:#262626;">$7.02</div><div class="t" style="left:553.5px;top:590.5px;font-family:'Liberation Serif',serif;font-size:14px;letter-spacing:0.33px;color:#262626;">Sub Total:</div><div class="t" style="left:429.79999999999995px;top:590.5px;width:400px;text-align:right;font-family:'Liberation Serif',serif;font-size:14px;letter-spacing:0.33px;color:#262626;">$222.00</div><div class="t" style="left:429.79999999999995px;top:607.0px;width:400px;text-align:right;font-family:'Liberation Serif',serif;font-size:14px;letter-spacing:0.33px;color:#262626;">========</div><div class="t" style="left:553.5px;top:623.5px;font-family:'Liberation Serif',serif;font-size:14px;letter-spacing:0.33px;color:#262626;">Amount Due:</div><div class="t" style="left:429.79999999999995px;top:623.5px;width:400px;text-align:right;font-family:'Liberation Serif',serif;font-size:14px;letter-spacing:0.33px;color:#262626;">$229.02</div><div class="t" style="left:553.5px;top:656.5px;font-family:'Liberation Serif',serif;font-size:14px;letter-spacing:0.33px;color:#262626;">Visa TEND:</div><div class="t" style="left:429.79999999999995px;top:656.5px;width:400px;text-align:right;font-family:'Liberation Serif',serif;font-size:14px;letter-spacing:0.33px;color:#262626;">$229.02</div><svg style="position:absolute;left:0;top:0" width="1600" height="900"><rect x="624" y="314" width="2" height="43" fill="#000"/><rect x="632" y="314" width="2" height="43" fill="#000"/><rect x="636.5" y="314" width="6" height="43" fill="#000"/><rect x="644.2" y="314" width="6" height="43" fill="#000"/><rect x="652.4" y="314" width="2.4" height="43" fill="#000"/><rect x="658.1" y="314" width="6" height="43" fill="#000"/><rect x="666.1" y="314" width="6" height="43" fill="#000"/><rect x="677.7" y="314" width="2.2" height="43" fill="#000"/><rect x="682.2" y="314" width="2.3" height="43" fill="#000"/><rect x="686.8" y="314" width="2.2" height="43" fill="#000"/><rect x="692.3" y="314" width="6" height="43" fill="#000"/><rect x="700.6" y="314" width="2.3" height="43" fill="#000"/><rect x="708.4" y="314" width="2.5" height="43" fill="#000"/><rect x="712.9" y="314" width="6" height="43" fill="#000"/><rect x="720.9" y="314" width="2.3" height="43" fill="#000"/><rect x="726.8" y="314" width="2.3" height="43" fill="#000"/><rect x="734.8" y="314" width="2.2" height="43" fill="#000"/><rect x="739" y="314" width="6" height="43" fill="#000"/><rect x="747" y="314" width="6" height="43" fill="#000"/><rect x="755.2" y="314" width="2.6" height="43" fill="#000"/></svg></body></html>
